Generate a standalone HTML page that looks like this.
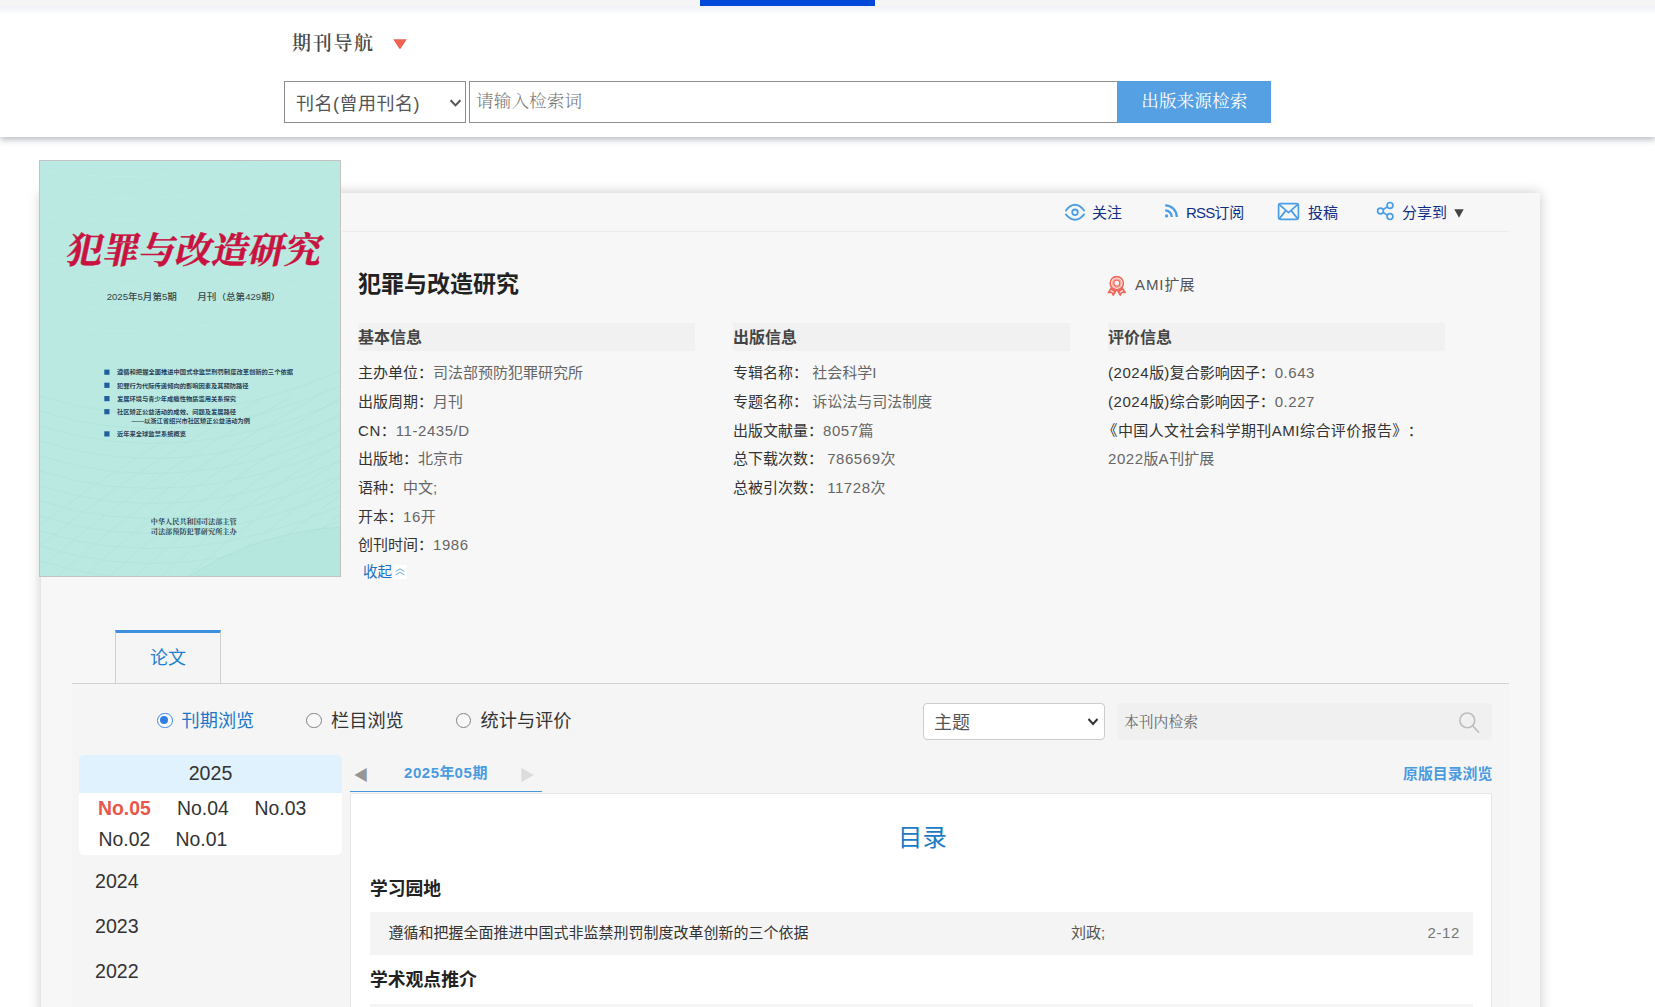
<!DOCTYPE html>
<html lang="zh-CN">
<head>
<meta charset="utf-8">
<title>犯罪与改造研究</title>
<style>
*{box-sizing:border-box;margin:0;padding:0}
html,body{width:1655px;height:1007px;overflow:hidden;background:#fff}
body{position:relative;font-family:"Liberation Sans","Noto Sans CJK SC",sans-serif;color:#333;font-size:15.4px;text-spacing-trim:space-all}
.abs{position:absolute}
.serif{font-family:"Liberation Serif","Noto Serif CJK SC",serif}
/* top strip */
#strip{left:0;top:0;width:1655px;height:16px;background:linear-gradient(#f5f5f5 0,#f5f5f5 6px,#eff1f6 6px,#fff 15px)}
#bluebar{left:700px;top:0;width:175px;height:6px;background:#0049d8}
/* header */
#header{left:0;top:0;width:1655px;height:137px;background:transparent;box-shadow:0 3px 6px rgba(40,45,70,.30)}
#navtitle{left:292px;top:28.5px;font-size:19px;font-weight:600;letter-spacing:1.7px;color:#4a4a4a;line-height:30px;white-space:nowrap}
#navtri{left:393px;top:39px;width:14px;height:10px}
#sel1{left:284px;top:81px;width:182px;height:42px;border:1px solid #8c8c8c;background:#fff;font-size:18px;color:#555;line-height:44px;padding-left:11px;letter-spacing:.5px;white-space:nowrap}
#inp1{left:469px;top:81px;width:649px;height:42px;border:1px solid #8f8f8f;background:#fff;font-size:17.6px;font-weight:300;color:#777;line-height:38px;padding-left:6px;letter-spacing:.1px;white-space:nowrap}
#btn1{left:1117.7px;top:81px;width:153.3px;height:42px;background:#55a0e2;color:#fff;font-size:17.6px;line-height:41px;text-align:center;letter-spacing:.1px;white-space:nowrap}
/* panel */
#panel{left:41px;top:193px;width:1498.5px;height:830px;background:#f7f7f7;box-shadow:0 0 12px rgba(0,0,0,.22)}
#cover{left:39px;top:160px;width:302px;height:417px;border:1px solid #c6c1c3;background:#b9e9e1;overflow:hidden}
#cover svg{display:block;width:300px;height:415px}
/* actions */
.act{top:200.6px;height:24px;line-height:24px;font-size:15px;color:#0f2f85;white-space:nowrap}
#actline{left:342px;top:231px;width:1167px;height:1px;background:#ececec}
/* info */
#jtitle{left:358px;top:266px;font-size:23px;font-weight:700;color:#222;line-height:36px;white-space:nowrap}
.band{height:28px;background:#f1f1f1;top:323px;width:337px;font-size:16px;font-weight:700;color:#444;line-height:30px;white-space:nowrap}
.row{height:28.65px;line-height:28.65px;font-size:15px;white-space:nowrap;color:#666}
.row b{font-weight:400;color:#333}
.col{top:359.3px}
.n{letter-spacing:.55px}
/* tabs */
#tab{left:115px;top:630px;width:106px;height:53px;border:1px solid #cfcfcf;border-top:3px solid #3f8fe0;border-bottom:none;background:#f5f5f5;font-size:18px;color:#1f7fd0;text-align:center;line-height:50px}
#tabline{left:72px;top:683px;width:1437px;height:1px;background:#d2d2d2}
#lower{left:72px;top:684px;width:1437px;height:330px;background:#f5f5f5}
.radio{top:712.8px;width:15.6px;height:15.6px;border-radius:50%;border:1.6px solid #828282;background:#f8f8f8}
.radio.on{border-color:#3a84e4;border-width:1.7px;background:#fff}
.radio.on:after{content:"";position:absolute;left:1.8px;top:1.8px;width:8.6px;height:8.6px;border-radius:50%;background:#2f7fe4}
.rlab{top:707.4px;font-size:18.2px;line-height:28px;color:#333;white-space:nowrap}
#sel2{left:923px;top:703px;width:182px;height:37px;border:1px solid #ccc;border-radius:4px;background:#fff;font-size:18px;color:#555;line-height:38px;padding-left:10px}
#inp2{left:1117px;top:702.6px;width:375px;height:37.6px;border-radius:4px;background:#f0f0f0;font-size:14.8px;color:#6a6a6a;line-height:38px;padding-left:7px;white-space:nowrap}
/* years */
#y2025{left:79px;top:754.5px;width:263px;height:38.3px;border-radius:5px 5px 0 0;background:#e0f2fe;font-size:19.6px;color:#333;text-align:center;line-height:36px;padding-left:0}
#issues{left:79px;top:792.8px;width:263px;height:62px;background:#fff;border-radius:0 0 5px 5px}
.iss{font-size:19.4px;line-height:30px;color:#333;white-space:nowrap}
.yr{left:95px;font-size:19.6px;line-height:30px;color:#333}
/* content */
#prev{left:353.6px;top:763px;font-size:15px;color:#969696;line-height:24px}
#cur{left:404px;top:761px;font-size:15px;font-weight:700;color:#4a9be0;line-height:24px;white-space:nowrap}
#next{left:519.5px;top:763px;font-size:15px;color:#dcdcdc;line-height:24px}
#curline{left:350px;top:791px;width:192px;height:1.4px;background:#4a96dd}
#orig{left:1403px;top:762px;font-size:14.9px;font-weight:700;color:#4a9be0;line-height:24px;white-space:nowrap}
#content{left:350px;top:793px;width:1142px;height:230px;background:#fff;border:1px solid #e6e6e6}
#mulu{left:898px;top:818px;font-size:24.4px;color:#1b7bc4;line-height:40px;white-space:nowrap}
.sec{left:370px;font-size:17.8px;font-weight:700;color:#222;line-height:30px;white-space:nowrap}
.art{left:370px;width:1103px;height:42.6px;background:#f4f4f4;font-size:15px;line-height:42px;color:#333}
.art span{position:absolute;white-space:nowrap}
</style>
</head>
<body>
<div id="strip" class="abs"></div>
<div id="header" class="abs"></div>
<div id="bluebar" class="abs"></div>
<div id="navtitle" class="abs serif">期刊导航</div>
<svg id="navtri" class="abs" viewBox="0 0 14 10"><path d="M0.2 0.3 H13.8 L7.9 9.3 Q7 10.3 6.1 9.3Z" fill="#ee6352"/></svg>
<div id="sel1" class="abs">刊名(曾用刊名)<svg class="abs" style="left:164px;top:15.5px" width="13" height="10" viewBox="0 0 13 10"><path d="M1.6 2.2 L6.5 7.4 L11.4 2.2" fill="none" stroke="#555" stroke-width="2"/></svg></div>
<div id="inp1" class="abs serif">请输入检索词</div>
<div id="btn1" class="abs serif">出版来源检索</div>

<div id="panel" class="abs"></div>
<div id="cover" class="abs">
<svg viewBox="0 0 300 415">
<rect width="300" height="415" fill="#b9e9e1"/>
<g fill="none" stroke="#d6f4ee" stroke-width="0.6" opacity="0.35"><path d="M-20 0 Q40 120 210 210" /><path d="M8 0 Q68 120 238 210" /><path d="M36 0 Q96 120 266 210" /><path d="M64 0 Q124 120 294 210" /><path d="M92 0 Q152 120 322 210" /><path d="M120 0 Q180 120 350 210" /><path d="M148 0 Q208 120 378 210" /><path d="M176 0 Q236 120 406 210" /><path d="M204 0 Q264 120 434 210" /><path d="M0 10 Q150 30 300 -20" /><path d="M0 32 Q150 52 300 2" /><path d="M0 54 Q150 74 300 24" /><path d="M0 76 Q150 96 300 46" /><path d="M0 98 Q150 118 300 68" /><path d="M0 120 Q150 140 300 90" /><path d="M0 142 Q150 162 300 112" /><path d="M0 164 Q150 184 300 134" /></g><g fill="none" stroke="#a4d8cf" stroke-width="0.6" opacity="0.4"><path d="M-60 415 Q30 330 200 235" /><path d="M-34 415 Q56 330 226 235" /><path d="M-8 415 Q82 330 252 235" /><path d="M18 415 Q108 330 278 235" /><path d="M44 415 Q134 330 304 235" /><path d="M70 415 Q160 330 330 235" /><path d="M96 415 Q186 330 356 235" /><path d="M122 415 Q212 330 382 235" /><path d="M148 415 Q238 330 408 235" /><path d="M174 415 Q264 330 434 235" /><path d="M200 415 Q290 330 460 235" /><path d="M226 415 Q316 330 486 235" /><path d="M252 415 Q342 330 512 235" /><path d="M278 415 Q368 330 538 235" /><path d="M0 235 Q140 280 300 210" /><path d="M0 250 Q140 295 300 225" /><path d="M0 265 Q140 310 300 240" /><path d="M0 280 Q140 325 300 255" /><path d="M0 295 Q140 340 300 270" /><path d="M0 310 Q140 355 300 285" /><path d="M0 325 Q140 370 300 300" /><path d="M0 340 Q140 385 300 315" /><path d="M0 355 Q140 400 300 330" /><path d="M0 370 Q140 415 300 345" /><path d="M0 385 Q140 430 300 360" /><path d="M0 400 Q140 445 300 375" /></g><path d="M150 415 Q215 372 300 366 V415Z" fill="#b4e5dd" opacity="0.55"/><path d="M150 415 Q215 372 300 366" fill="none" stroke="#a9d9d1" stroke-width="0.8" opacity="0.6"/><g font-family="'Liberation Serif','Noto Serif CJK SC',serif" font-weight="700" font-size="36" fill="#c9123f" stroke="#c9123f" stroke-width="0.5" transform="skewX(-12)"><text x="46.5" y="102" textLength="255" lengthAdjust="spacingAndGlyphs">犯罪与改造研究</text></g><g font-family="'Liberation Sans','Noto Sans CJK SC',sans-serif" font-size="8.6" fill="#35464a" font-weight="500"><text x="66.7" y="139.4" textLength="70.2" lengthAdjust="spacingAndGlyphs">2025年5月第5期</text><text x="157.3" y="139.4" textLength="83" lengthAdjust="spacingAndGlyphs">月刊（总第429期）</text></g><g font-family="'Liberation Sans','Noto Sans CJK SC',sans-serif" font-size="6.1" font-weight="700" fill="#2b3f57"><rect x="64.3" y="208.6" width="5.2" height="5.2" fill="#1e5f9c"/><text x="77" y="213.4" textLength="176.0" lengthAdjust="spacingAndGlyphs">遵循和把握全面推进中国式非监禁刑罚制度改革创新的三个依据</text><rect x="64.3" y="221.7" width="5.2" height="5.2" fill="#1e5f9c"/><text x="77" y="226.5" textLength="131.6" lengthAdjust="spacingAndGlyphs">犯罪行为代际传递倾向的影响因素及其预防路径</text><rect x="64.3" y="235.0" width="5.2" height="5.2" fill="#1e5f9c"/><text x="77" y="239.8" textLength="119.0" lengthAdjust="spacingAndGlyphs">发展环境与青少年成瘾性物质滥用关系探究</text><rect x="64.3" y="248.1" width="5.2" height="5.2" fill="#1e5f9c"/><text x="77" y="252.9" textLength="119.0" lengthAdjust="spacingAndGlyphs">社区矫正公益活动的成效、问题及发展路径</text><text x="91.5" y="262.2" textLength="118.5" lengthAdjust="spacingAndGlyphs">——以浙江省绍兴市社区矫正公益活动为例</text><rect x="64.3" y="270.3" width="5.2" height="5.2" fill="#1e5f9c"/><text x="77" y="275.1" textLength="69.0" lengthAdjust="spacingAndGlyphs">近年来全球监禁系统概览</text></g><g font-family="'Liberation Serif','Noto Serif CJK SC',serif" font-size="7" font-weight="700" fill="#35454a"><text x="110.8" y="363.3" textLength="85.8" lengthAdjust="spacingAndGlyphs">中华人民共和国司法部主管</text><text x="110.8" y="373.3" textLength="85.8" lengthAdjust="spacingAndGlyphs">司法部预防犯罪研究所主办</text></g>
</svg>
</div>

<div id="actline" class="abs"></div>
<div class="abs act" style="left:1092px">关注</div>
<div class="abs act" style="left:1186px"><span style="letter-spacing:-.85px">RSS</span>订阅</div>
<div class="abs act" style="left:1308px">投稿</div>
<div class="abs act" style="left:1402px">分享到</div>
<svg class="abs" style="left:1453.5px;top:208.8px" width="10" height="9" viewBox="0 0 10 9"><path d="M0.3 0.3 H9.7 L5 8.7Z" fill="#454545"/></svg>


<svg class="abs" style="left:1064px;top:202px" width="22" height="20" viewBox="0 0 22 20"><g fill="none" stroke="#4a9ee6" stroke-width="1.9" stroke-linecap="round"><path d="M1.9 8.5 C5 4.4 8 2.7 11 2.7 C14 2.7 17 4.4 20.1 8.5"/><path d="M1.9 12.4 C5 16.3 8 17.7 11 17.7 C14 17.7 17 16.3 20.1 12.4"/><circle cx="11" cy="10.3" r="2.8" stroke-width="1.8"/></g></svg>
<svg class="abs" style="left:1164px;top:203px" width="15" height="16" viewBox="0 0 15 16"><g fill="none" stroke="#4a9ee6" stroke-width="2.3"><path d="M1.2 2.4 A11.6 11.6 0 0 1 12.8 14"/><path d="M1.2 7.4 A6.6 6.6 0 0 1 7.8 14"/></g><circle cx="2.6" cy="12.9" r="1.6" fill="#4a9ee6"/></svg>
<svg class="abs" style="left:1277px;top:202px" width="23" height="19" viewBox="0 0 23 19"><g fill="none" stroke="#4a9ee6" stroke-width="1.7" stroke-linejoin="round"><rect x="1.6" y="1.6" width="19.8" height="15.8" rx="1.6"/><path d="M2.4 2.6 L11.5 10.6 L20.6 2.6"/><path d="M2.4 16.6 L8.8 8.6 M20.6 16.6 L14.2 8.6"/></g></svg>
<svg class="abs" style="left:1376px;top:201px" width="19" height="20" viewBox="0 0 19 20"><g fill="none" stroke="#4a9ee6" stroke-width="1.7"><circle cx="4.5" cy="10" r="2.9"/><circle cx="14" cy="4.4" r="2.9"/><circle cx="14" cy="15.6" r="2.9"/><path d="M7 8.6 L11.5 5.8 M7 11.4 L11.5 14.2"/></g></svg>
<svg class="abs" style="left:1107px;top:275px" width="20" height="22" viewBox="0 0 20 22"><g fill="none" stroke="#f2685a"><circle cx="9.8" cy="8.2" r="6.6" stroke-width="1.6"/><circle cx="9.8" cy="8.2" r="4.4" stroke-width="1.2" opacity=".55"/><circle cx="9.8" cy="8.2" r="3" stroke-width="1.3"/><path d="M4.4 12.6 L1.2 17.6 L4.8 17.3 L6.3 20.4 L9.4 15.2Z M15.2 12.6 L18.4 17.6 L14.8 17.3 L13.3 20.4 L10.2 15.2Z" stroke-width="1.3" stroke-linejoin="round" fill="#f2685a"/><path d="M3.6 15.6 L6.6 17.2 M16 15.6 L13 17.2" stroke="#f7f7f7" stroke-width="1.1"/></g></svg>
<svg class="abs" style="left:1456px;top:710px;z-index:5" width="26" height="26" viewBox="0 0 26 26"><g fill="none" stroke="#bdbdbd" stroke-width="1.6" stroke-linecap="round"><circle cx="11.3" cy="10.4" r="7.4"/><path d="M16.8 15.9 L22.6 22.2"/></g></svg>
<div class="abs" style="left:393px;top:565px;width:14px;height:14px;background:#fff"></div>
<svg class="abs" style="left:393px;top:565px" width="14" height="14" viewBox="0 0 14 14"><g fill="none" stroke="#5f9fdc" stroke-width="0.9"><path d="M2.5 6.6 L7 3.8 L11.5 6.6"/><path d="M2.5 10 L7 7.2 L11.5 10"/></g></svg>
<div id="jtitle" class="abs">犯罪与改造研究</div>
<div class="abs" style="left:1135px;top:273px;font-size:15px;line-height:24px;color:#555;white-space:nowrap"><span style="letter-spacing:.9px">AMI</span>扩展</div>

<div class="abs band" style="left:358px">基本信息</div>
<div class="abs band" style="left:733px">出版信息</div>
<div class="abs band" style="left:1108px">评价信息</div>

<div class="abs col" style="left:358px">
<div class="row"><b>主办单位：</b>司法部预防犯罪研究所</div>
<div class="row"><b>出版周期：</b>月刊</div>
<div class="row"><b><span class="n">CN</span>：</b><span class="n">11-2435/D</span></div>
<div class="row"><b>出版地：</b>北京市</div>
<div class="row"><b>语种：</b>中文;</div>
<div class="row"><b>开本：</b><span class="n">16</span>开</div>
<div class="row"><b>创刊时间：</b><span class="n">1986</span></div>
</div>
<div class="abs col" style="left:733px">
<div class="row"><b>专辑名称：</b> 社会科学I</div>
<div class="row"><b>专题名称：</b> 诉讼法与司法制度</div>
<div class="row"><b>出版文献量：</b><span class="n">8057</span>篇</div>
<div class="row"><b>总下载次数：</b> <span class="n">786569</span>次</div>
<div class="row"><b>总被引次数：</b> <span class="n">11728</span>次</div>
</div>
<div class="abs col" style="left:1108px">
<div class="row"><b><span class="n">(2024</span>版<span class="n">)</span>复合影响因子：</b><span class="n">0.643</span></div>
<div class="row"><b><span class="n">(2024</span>版<span class="n">)</span>综合影响因子：</b><span class="n">0.227</span></div>
<div class="row" style="margin-left:-5.5px;letter-spacing:.38px"><b>《中国人文社会科学期刊<span class="n">AMI</span>综合评价报告》：</b></div>
<div class="row"><span class="n">2022</span>版<span class="n">A</span>刊扩展</div>
</div>
<div class="abs" style="left:363px;top:561px;font-size:14.6px;line-height:22px;color:#1b72c4;white-space:nowrap">收起</div>

<div id="lower" class="abs"></div>
<div id="tabline" class="abs"></div>
<div id="tab" class="abs">论文</div>

<div class="abs radio on" style="left:157px"></div>
<div class="abs rlab" style="left:181.5px;color:#1b78c9">刊期浏览</div>
<div class="abs radio" style="left:306px"></div>
<div class="abs rlab" style="left:331px">栏目浏览</div>
<div class="abs radio" style="left:455.5px"></div>
<div class="abs rlab" style="left:480.5px">统计与评价</div>

<div id="sel2" class="abs">主题<svg class="abs" style="right:5px;top:13px" width="12" height="10" viewBox="0 0 12 10"><path d="M1.5 2 L6 7 L10.5 2" fill="none" stroke="#333" stroke-width="2"/></svg></div>
<div id="inp2" class="abs serif">本刊内检索</div>

<div id="y2025" class="abs">2025</div>
<div id="issues" class="abs"></div>
<div class="abs iss" style="left:98px;top:793px;font-weight:700;color:#e8574a">No.05</div>
<div class="abs iss" style="left:177px;top:793px">No.04</div>
<div class="abs iss" style="left:254.5px;top:793px">No.03</div>
<div class="abs iss" style="left:98.5px;top:824px">No.02</div>
<div class="abs iss" style="left:175.5px;top:824px">No.01</div>
<div class="abs yr" style="top:866px">2024</div>
<div class="abs yr" style="top:911px">2023</div>
<div class="abs yr" style="top:956px">2022</div>

<div id="prev" class="abs">◀</div>
<div id="cur" class="abs"><span class="n">2025</span>年<span class="n">05</span>期</div>
<div id="next" class="abs">▶</div>
<div id="curline" class="abs"></div>
<div id="orig" class="abs">原版目录浏览</div>
<div id="content" class="abs"></div>
<div id="mulu" class="abs">目录</div>
<div class="abs sec" style="top:874px">学习园地</div>
<div class="abs art" style="top:912px"><span style="left:18.5px">遵循和把握全面推进中国式非监禁刑罚制度改革创新的三个依据</span><span style="left:701px;color:#555">刘政;</span><span style="right:13px;color:#777;letter-spacing:.6px">2-12</span></div>
<div class="abs sec" style="top:965px">学术观点推介</div>
<div class="abs art" style="top:1004px"></div>
</body>
</html>
